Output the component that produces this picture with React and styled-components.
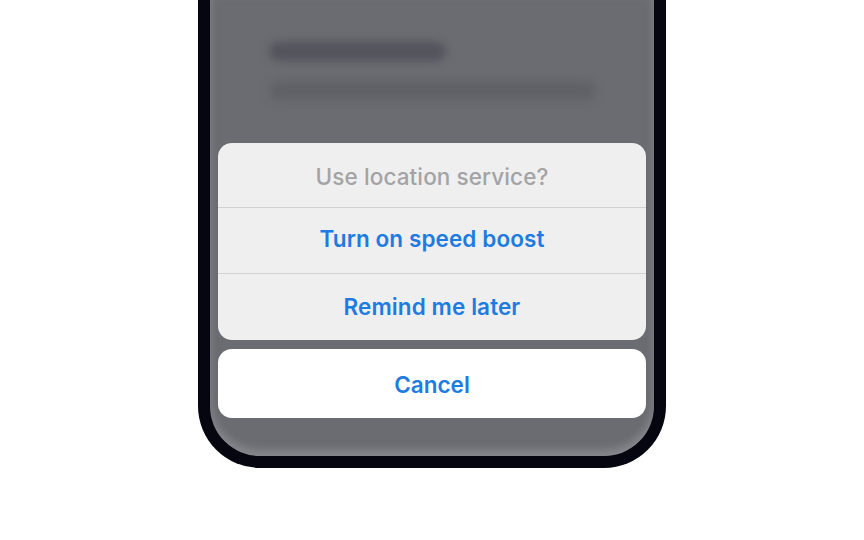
import styled, { createGlobalStyle } from "styled-components";

const GlobalStyle = createGlobalStyle`
  html, body {
    margin: 0;
    padding: 0;
    background: #ffffff;
  }
  body {
    font-family: "Inter", "Liberation Sans", sans-serif;
  }
`;

const App = () => {
  return (
    <>
      <GlobalStyle />
      <Page>
        <Phone>
          <Screen>
            <Placeholder>
              <Bar width="177px" shade="#53545c" />
              <Bar width="327px" shade="#606167" />
            </Placeholder>
            <Sheet>
              <Group>
                <Title>Use location service?</Title>
                <Action>Turn on speed boost</Action>
                <Action last>Remind me later</Action>
              </Group>
              <Cancel>Cancel</Cancel>
            </Sheet>
          </Screen>
        </Phone>
      </Page>
    </>
  );
};

export default App;

const Page = styled.div`
  width: 864px;
  height: 540px;
  display: flex;
  justify-content: center;
  align-items: flex-start;
`;

const Phone = styled.div`
  box-sizing: border-box;
  width: 468px;
  height: 468px;
  background: #05060f;
  padding: 0 12px 12px;
  border-radius: 0 0 62px 62px;
  display: flex;
`;

const Screen = styled.div`
  flex: 1;
  background: #6b6c71;
  border-radius: 0 0 50px 50px;
  box-shadow: inset 0 -6px 9px rgba(190, 190, 196, 0.35);
  padding: 0 8px;
  display: flex;
  flex-direction: column;
`;

const Placeholder = styled.div`
  display: flex;
  flex-direction: column;
  gap: 20px;
  padding: 42px 0 0 51px;
  height: 100px;
  box-sizing: border-box;
`;

const Bar = styled.div`
  width: ${(p) => p.width};
  height: 26px;
  border-radius: 13px;
  background: ${(p) => p.shade};
  filter: blur(4px);
`;

const Sheet = styled.div`
  margin-top: 43px;
  display: flex;
  flex-direction: column;
  gap: 9px;
`;

const Group = styled.div`
  background: #efefef;
  border-radius: 14px;
  overflow: hidden;
  display: flex;
  flex-direction: column;
`;

const Row = styled.div`
  height: 65px;
  box-sizing: border-box;
  display: flex;
  align-items: center;
  justify-content: center;
  font-size: 22.5px;
  letter-spacing: 0.1px;
  & + & {
    border-top: 1px solid #d2d2d4;
  }
`;

const Title = styled(Row)`
  height: 64px;
  padding-top: 2px;
  color: #a3a3a5;
  font-weight: 500;
`;

const Action = styled(Row)`
  height: ${(p) => (p.last ? "67px" : "66px")};
  padding-bottom: ${(p) => (p.last ? "1px" : "4px")};
  color: #1d7be1;
  font-weight: 600;
`;

const Cancel = styled.div`
  height: 69px;
  background: #ffffff;
  border-radius: 14px;
  display: flex;
  align-items: center;
  justify-content: center;
  font-size: 22.5px;
  font-weight: 600;
  color: #1d7be1;
  padding-top: 2px;
  box-sizing: border-box;
`;
